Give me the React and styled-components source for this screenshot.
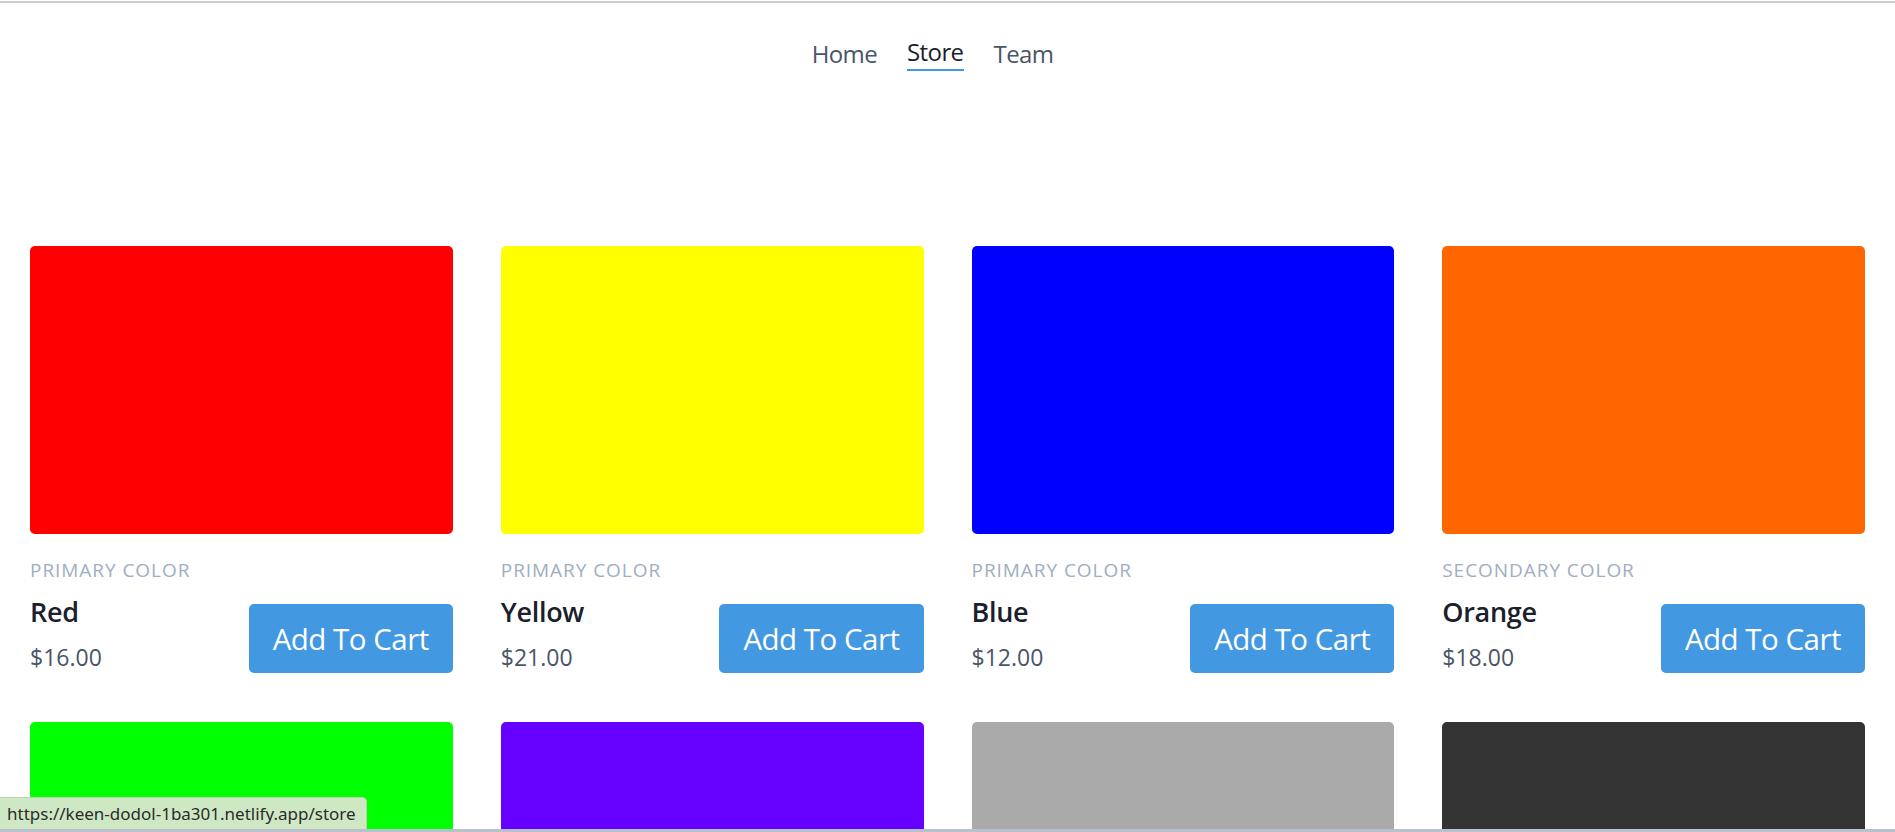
import React from "react";
import styled, { createGlobalStyle } from "styled-components";

const Global = createGlobalStyle`
  html, body { margin: 0; padding: 0; overflow: hidden; background: #fff; }
  body { font-family: "Open Sans", "Noto Sans", sans-serif; }
  * { box-sizing: border-box; }
`;

const Page = styled.div`
  min-height: 832px;
  border-top: 2px solid #cccccc;
  margin-top: 1px;
`;

const Nav = styled.nav`
  display: flex;
  justify-content: center;
  align-items: flex-end;
  padding-top: 32px;
`;

const NavLink = styled.a`
  font-size: 24px;
  letter-spacing: -0.6px;
  line-height: 34px;
  margin-right: 30px;
  text-decoration: none;
  color: ${(p) => (p.$active ? "#1a202c" : "#4a5568")};
  border-bottom: ${(p) => (p.$active ? "2.5px solid #4299e1" : "0")};
  cursor: pointer;
`;

const Grid = styled.main`
  display: grid;
  grid-template-columns: repeat(4, 1fr);
  column-gap: 48px;
  row-gap: 48px;
  padding: 0 30px;
  margin-top: 175px;
`;

const Card = styled.div`
  display: flex;
  flex-direction: column;
`;

const Swatch = styled.div`
  height: 288px;
  border-radius: 5px;
  background: ${(p) => p.$color};
`;

const Category = styled.div`
  margin-top: 21px;
  font-size: 19px;
  line-height: 30px;
  letter-spacing: 0.05em;
  text-transform: uppercase;
  color: #a0aec0;
`;

const Row = styled.div`
  display: flex;
  justify-content: space-between;
  align-items: flex-start;
  margin-top: 9px;
`;

const Info = styled.div`
  display: flex;
  flex-direction: column;
`;

const Name = styled.div`
  font-size: 27px;
  letter-spacing: -0.3px;
  line-height: 36px;
  font-weight: 600;
  color: #1a202c;
`;

const Price = styled.div`
  font-size: 23px;
  line-height: 34px;
  margin-top: 10px;
  color: #4a5568;
`;

const CartButton = styled.button`
  margin-top: 10px;
  height: 69px;
  padding: 0 24px;
  border: 0;
  border-radius: 5px;
  background: #4299e1;
  color: #fff;
  font-family: inherit;
  font-size: 29.5px;
  letter-spacing: -0.5px;
  cursor: pointer;
`;

const StatusBubble = styled.div`
  position: fixed;
  left: 0;
  bottom: 3px;
  height: 32px;
  padding: 0 10px 0 7px;
  display: flex;
  align-items: center;
  background: #cfe8c4;
  border-top: 1px solid #b9d4ad;
  border-right: 1px solid #b9d4ad;
  border-top-right-radius: 5px;
  font-family: "Noto Sans", sans-serif;
  font-size: 17px;
  color: #2b2b2b;
`;

const BottomEdge = styled.div`
  position: fixed;
  left: 0;
  right: 0;
  bottom: 0;
  height: 3px;
  background: #b9c2cc;
`;

const products = [
  { name: "Red", category: "Primary Color", price: "$16.00", color: "#ff0000" },
  { name: "Yellow", category: "Primary Color", price: "$21.00", color: "#ffff00" },
  { name: "Blue", category: "Primary Color", price: "$12.00", color: "#0000ff" },
  { name: "Orange", category: "Secondary Color", price: "$18.00", color: "#ff6600" },
  { name: "Green", category: "Secondary Color", price: "$14.00", color: "#00ff00" },
  { name: "Purple", category: "Secondary Color", price: "$19.00", color: "#6600ff" },
  { name: "Gray", category: "Neutral Color", price: "$10.00", color: "#aaaaaa" },
  { name: "Black", category: "Neutral Color", price: "$11.00", color: "#333333" },
];

export default function App() {
  return (
    <>
      <Global />
      <Page>
        <Nav>
          <NavLink>Home</NavLink>
          <NavLink $active>Store</NavLink>
          <NavLink>Team</NavLink>
        </Nav>
        <Grid>
          {products.map((p) => (
            <Card key={p.name}>
              <Swatch $color={p.color} />
              <Category>{p.category}</Category>
              <Row>
                <Info>
                  <Name>{p.name}</Name>
                  <Price>{p.price}</Price>
                </Info>
                <CartButton>Add To Cart</CartButton>
              </Row>
            </Card>
          ))}
        </Grid>
      </Page>
      <StatusBubble>https://keen-dodol-1ba301.netlify.app/store</StatusBubble>
      <BottomEdge />
    </>
  );
}
